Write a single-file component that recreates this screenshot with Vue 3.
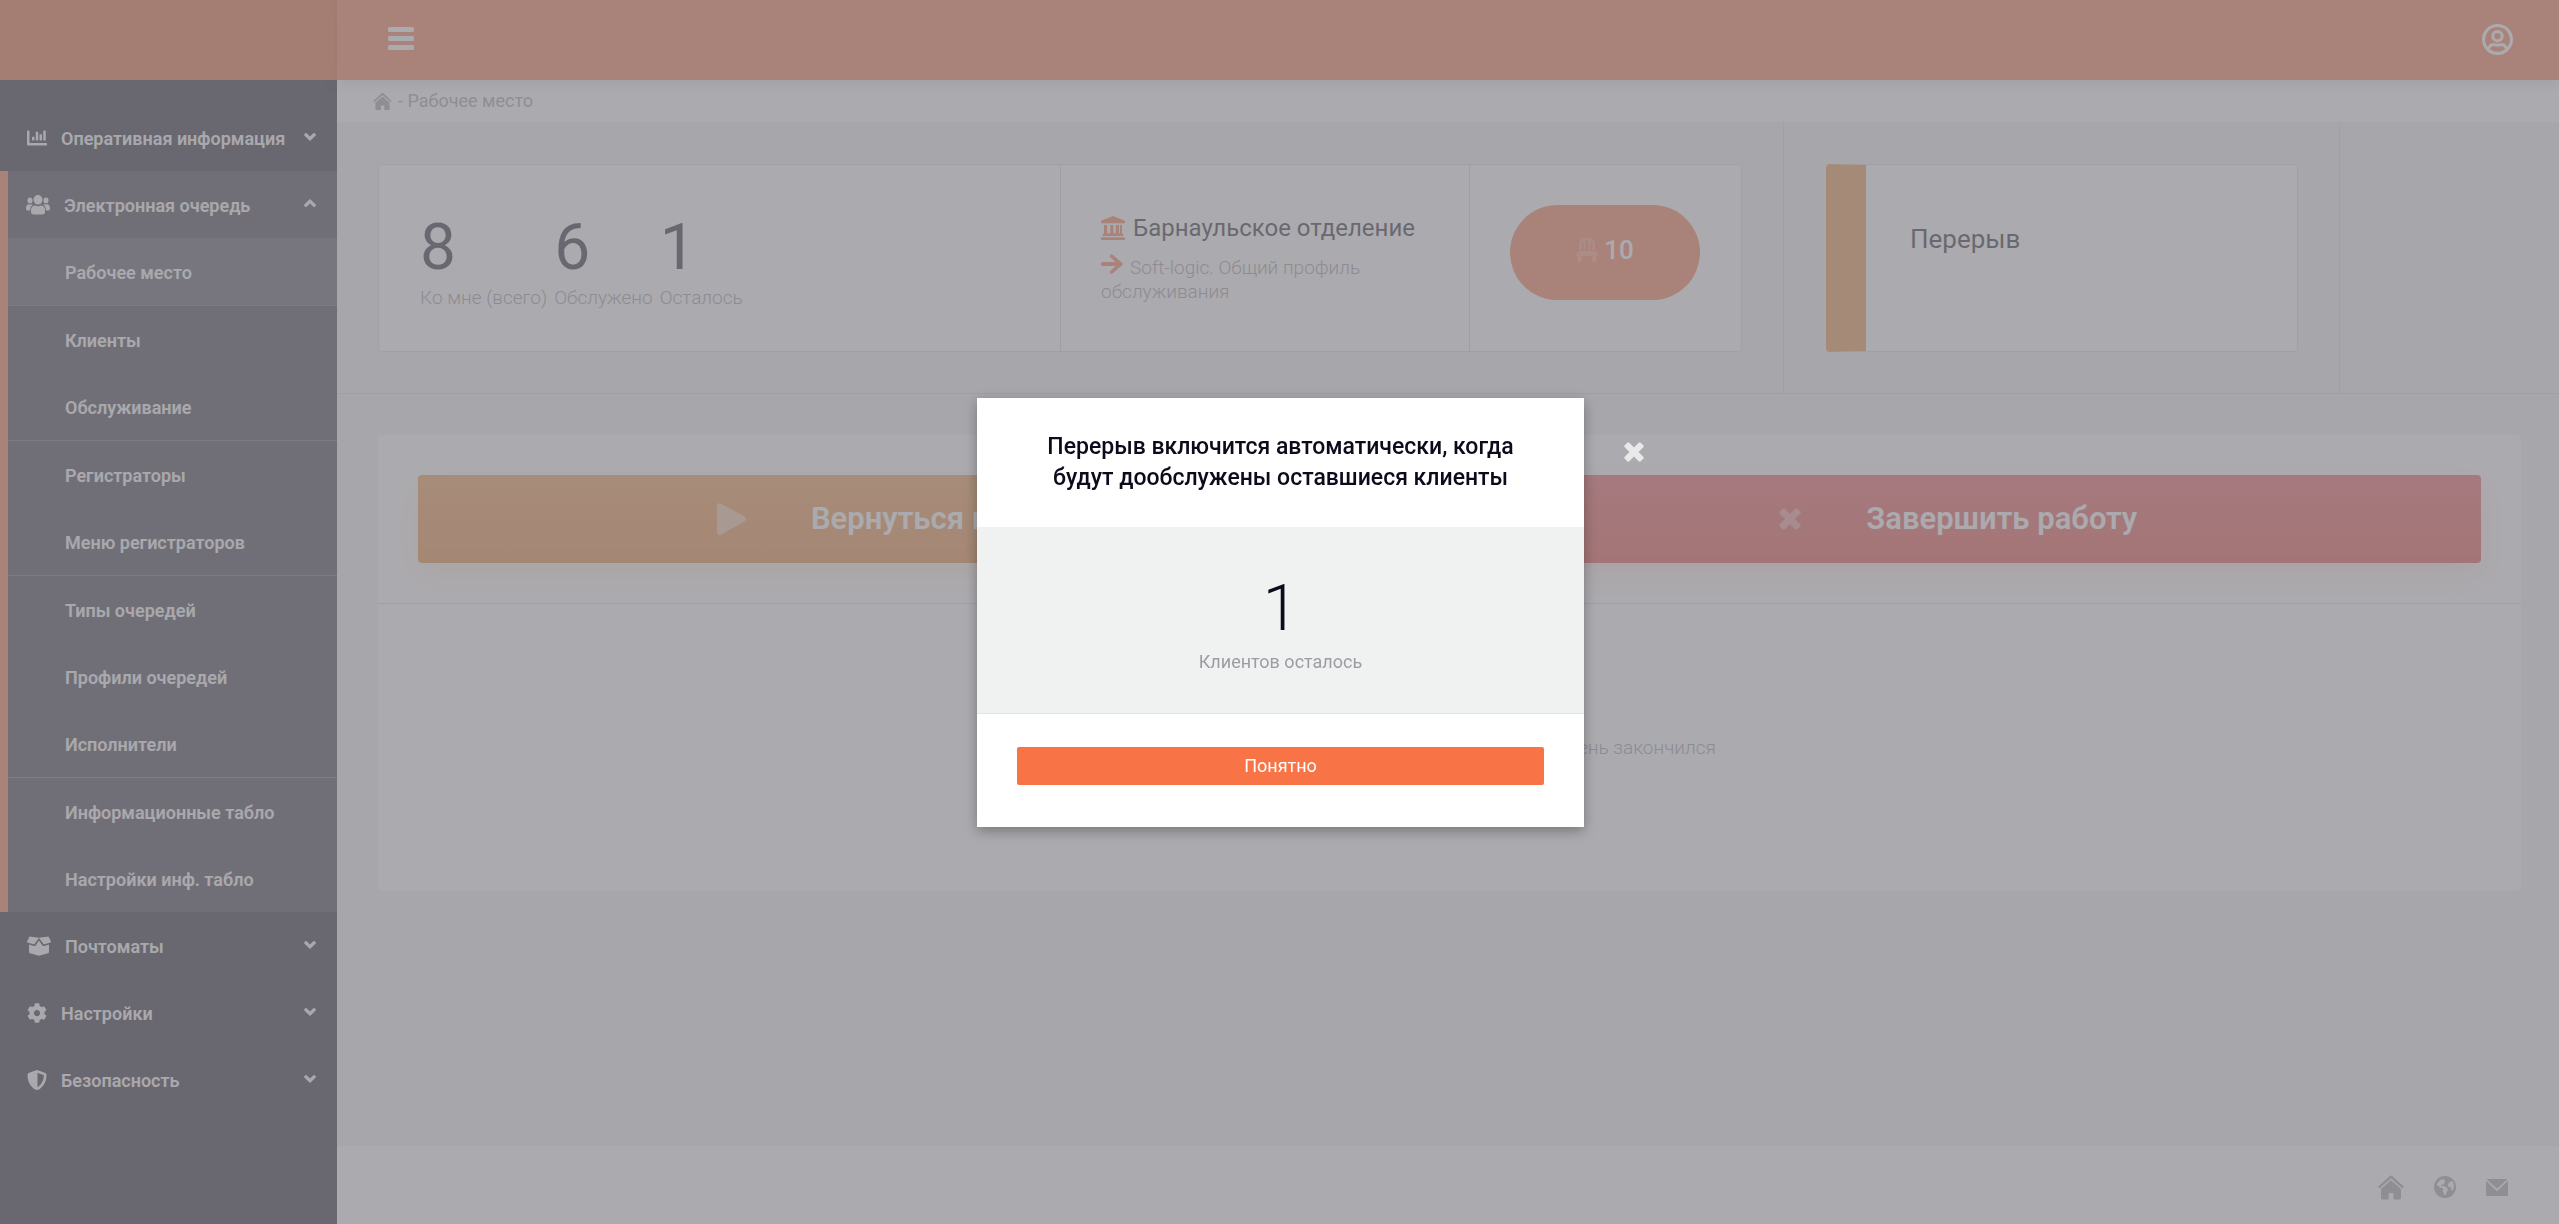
<script setup>
import { h } from 'vue'

const shapes = {
  chart: ['0 0 512 512', 'M332.8 320h38.4c6.4 0 12.8-6.4 12.8-12.8V172.8c0-6.4-6.4-12.8-12.8-12.8h-38.4c-6.4 0-12.8 6.4-12.8 12.8v134.4c0 6.4 6.4 12.8 12.8 12.8zm96 0h38.4c6.4 0 12.8-6.4 12.8-12.8V76.8c0-6.4-6.4-12.8-12.8-12.8h-38.4c-6.4 0-12.8 6.4-12.8 12.8v230.4c0 6.4 6.4 12.8 12.8 12.8zm-288 0h38.4c6.4 0 12.8-6.4 12.8-12.8v-70.4c0-6.4-6.4-12.8-12.8-12.8h-38.4c-6.4 0-12.8 6.4-12.8 12.8v70.4c0 6.4 6.4 12.8 12.8 12.8zm96 0h38.4c6.4 0 12.8-6.4 12.8-12.8V108.8c0-6.4-6.4-12.8-12.8-12.8h-38.4c-6.4 0-12.8 6.4-12.8 12.8v198.4c0 6.4 6.4 12.8 12.8 12.8zM496 384H64V80c0-8.84-7.16-16-16-16H16C7.16 64 0 71.16 0 80v336c0 17.67 14.33 32 32 32h464c8.84 0 16-7.16 16-16v-32c0-8.84-7.16-16-16-16z'],
  users: ['0 0 24 20', 'M12 0a4.5 4.8 0 0 1 0 9.6a4.5 4.8 0 0 1 0-9.6zM4 2.500a2.500 2.900 0 0 1 0 5.800a2.500 2.900 0 0 1 0-5.800zM20 2.500a2.500 2.900 0 0 1 0 5.800a2.500 2.900 0 0 1 0-5.800zM8.800 10.500q3.200 1.500 6.400 0q3.800.5 3.800 4.500v2q0 2.500-3 2.500H8q-3 0-3-2.500v-2q0-4 3.800-4.500zM2.500 9.200q1.500.7 3.200 0l1 .3Q4 11.500 3.900 15.500H1.500Q0 15.500 0 13.500q0-3.500 2.500-4.300zM21.500 9.200q-1.500.7-3.200 0l-1 .3q2.700 2 2.800 6h2.400q1.500 0 1.500-2q0-3.500-2.500-4.300z'],
  box: ['0 0 24 20', 'M2.500.5L12 1.700L21.500.5L24 5.600q.2.800-.6 1L17.500 8.300q-.8.200-1.200-.5L12 1.900L7.700 7.800q-.4.700-1.200.5L.6 6.600Q-.2 6.400 0 5.600zM12 4.500l3.200 4.700q.7 1 1.900.7L22 8.500V16q0 1-1 1.300l-8 2.200q-1 .3-2 0l-8-2.200Q2 17 2 16V8.500l4.900 1.400q1.200.3 1.900-.7z'],
  cog: ['0 0 512 512', 'M487.4 315.7l-42.6-24.6c4.3-23.2 4.3-47 0-70.2l42.6-24.6c4.9-2.8 7.1-8.6 5.500-14-11.100-35.600-30-67.800-54.700-94.600-3.800-4.100-10-5.100-14.800-2.300L380.800 110c-17.900-15.400-38.500-27.300-60.800-35.100V25.800c0-5.600-3.900-10.500-9.400-11.700-36.700-8.200-74.300-7.800-109.200 0-5.500 1.200-9.400 6.100-9.400 11.700V75c-22.200 7.900-42.800 19.800-60.800 35.100L88.700 85.500c-4.900-2.800-11-1.900-14.800 2.300-24.700 26.700-43.600 58.900-54.700 94.600-1.700 5.400.6 11.200 5.500 14L67.300 221c-4.300 23.200-4.300 47 0 70.200l-42.600 24.600c-4.900 2.800-7.100 8.600-5.500 14 11.100 35.600 30 67.800 54.700 94.600 3.800 4.100 10 5.100 14.800 2.300l42.600-24.600c17.900 15.400 38.500 27.300 60.800 35.100v49.200c0 5.600 3.900 10.500 9.400 11.700 36.700 8.200 74.300 7.800 109.200 0 5.500-1.200 9.400-6.100 9.400-11.700v-49.200c22.200-7.900 42.800-19.800 60.800-35.100l42.600 24.600c4.900 2.800 11 1.900 14.800-2.300 24.700-26.700 43.600-58.900 54.700-94.600 1.500-5.500-.7-11.300-5.600-14.100zM256 336c-44.100 0-80-35.900-80-80s35.900-80 80-80 80 35.900 80 80-35.900 80-80 80z'],
  shield: ['0 0 20 20', 'M10 0q.5 0 1 .2l7.300 2.900q1.200.5 1.200 1.800C19.500 12 16 17.500 11 19.800q-1 .4-2 0C4 17.500.5 12 .5 4.900q0-1.300 1.200-1.800L9 .2Q9.500 0 10 0zM10.500 2.700V17.200C14.300 15 16.700 10.600 16.900 5.300z'],
  chevron: ['0 0 12 9', 'M.3 2.200L1.300 1.200Q2 .6 2.700 1.200L6 4.600L9.300 1.200Q10 .6 10.700 1.200L11.700 2.200Q12.200 2.800 11.700 3.400L6.600 8.500Q6 9 5.400 8.500L.3 3.400Q-.2 2.800.3 2.200z'],
  bars: ['0 0 26 24', 'M1.500 0h23q1.500 0 1.500 1.500v2q0 1.500-1.500 1.500h-23Q0 5 0 3.500v-2Q0 0 1.500 0zM1.500 9h23q1.500 0 1.500 1.500v2q0 1.500-1.500 1.500h-23Q0 14 0 12.500v-2Q0 9 1.500 9zM1.500 18h23q1.500 0 1.500 1.500v2q0 1.500-1.500 1.500h-23Q0 23 0 21.500v-2Q0 18 1.500 18z'],
  home: ['0 0 26 24', 'M13 0q.6 0 1.100.5L26 11.200L24.500 13L13 2.800L1.500 13L0 11.200L11.900.5Q12.400 0 13 0zM13 4.800L23 13.600V22.500Q23 24 21.500 24H15.500V18Q15.500 17.500 15 17.500H11.200Q10.700 17.500 10.700 18V24H4.500Q3 24 3 22.500V13.600z'],
  bank: ['0 0 24 24', 'M12 0L24 4.800V6.500Q24 7.300 23.200 7.300H.8Q0 7.300 0 6.500V4.800zM3 9h3.200v8.200h3V9h3.200v8.200h-.8h3.200V9h3.200v8.200h1V9H21v8.200q1.300 0 1.300 1.500V20H1.700V18.700q0-1.500 1.300-1.500zM.8 21.300h22.400q.8 0 .8.800V24H0v-1.900Q0 21.300.8 21.300z'],
  arrow: ['0 0 22 20', 'M9 1.200Q10.300-.4 11.600.7L21.300 9Q22.200 10 21.300 11L11.600 19.500Q10.300 20.400 9 19q-.7-1 .3-2L14.500 12H1.500Q0 12 0 10.500v-1Q0 8 1.500 8H14.500L9.300 3.200Q8.300 2.200 9 1.200z'],
  chair: ['0 0 22 24', 'M3 12V6.500Q3 0 9.500 0h3Q19 0 19 6.500V12H16.500V6q0-2.500-2-3.300V12h-2V2.200h-3V12h-2V2.700Q5.500 3.500 5.500 6V12zM3.500 13h15q1.500 0 2 1.300l1.300 2.500Q22.500 18 21 18H20v6h-3.500V18H5.500V24H2V18H1Q-.5 18 .2 16.800l1.300-2.500Q2 13 3.500 13z'],
  play: ['0 0 29 32', 'M0 3.500Q0 0 3 .3Q4.500.5 6 1.800L27.500 13.500Q29 14.700 29 16T27.500 18.500L6 30.500Q4.500 31.800 3 32Q0 32 0 29z'],
  cross: ['0 0 22 22', 'M5.800.8L11 6L16.200.8Q17.300-.3 18.400.8L21.200 3.600Q22.300 4.700 21.200 5.800L16 11L21.200 16.200Q22.300 17.300 21.200 18.400L18.400 21.200Q17.300 22.300 16.200 21.200L11 16L5.800 21.200Q4.700 22.300 3.600 21.200L.8 18.400Q-.3 17.300.8 16.200L6 11L.8 5.800Q-.3 4.700.8 3.600L3.600.8Q4.700-.3 5.800.8z'],
  globe: ['0 0 22 22', 'M11 0a11 11 0 0 1 0 22a11 11 0 0 1 0-22zM6 4L3.200 7.500L3 9.200L6.500 11.500L9.500 12.500L8.800 15L10.500 19.500L12 18.800L12.500 16L14 14.300L13.300 12L9.500 10L7.500 10.300L7 8.800L9.500 8.500L11.300 5.500L9.800 3zM15.500 6L14 8.500L14.500 11L17 11.500L17.500 15L19.500 13L20 9L18.500 5z'],
  mail: ['0 0 22 17', 'M.5 0h21L11 9.800zM0 1.800L7 8.500L11 12.300L15 8.500L22 1.800V17H0z'],
  user: ['0 0 32 32', 'M16 0a16 16 0 0 1 0 32a16 16 0 0 1 0-32zM16 3.200a12.800 12.800 0 0 0-10.200 20.500Q8 19.500 12 19.500Q16 20.800 20 19.500Q24 19.500 26.200 23.700A12.800 12.800 0 0 0 16 3.200zM16 6.200a6.400 6.400 0 0 1 0 12.800a6.400 6.400 0 0 1 0-12.800zM16 9.300a3.200 3.200 0 0 0 0 6.500a3.200 3.200 0 0 0 0-6.500zM8 26Q16 31.500 24 26Q22.300 22.500 20 22.600Q16 24 12 22.600Q9.700 22.500 8 26z'],
}

const Icon = (props) =>
  h('svg', { viewBox: shapes[props.name][0], fill: 'currentColor', 'fill-rule': 'evenodd', 'aria-hidden': 'true' },
    [h('path', { d: shapes[props.name][1] })])
Icon.props = ['name']

const submenu = [
  ['Рабочее место'],
  ['Клиенты', 'Обслуживание'],
  ['Регистраторы', 'Меню регистраторов'],
  ['Типы очередей', 'Профили очередей', 'Исполнители'],
  ['Информационные табло', 'Настройки инф. табло'],
]
const lower = [
  { icon: 'box', label: 'Почтоматы', wide: true },
  { icon: 'cog', label: 'Настройки' },
  { icon: 'shield', label: 'Безопасность' },
]
const stats = [
  { value: 8, label: 'Ко мне (всего)' },
  { value: 6, label: 'Обслужено' },
  { value: 1, label: 'Осталось' },
]
</script>

<template>
  <div class="app">
    <aside class="sidebar">
      <div class="brand"></div>
      <nav class="menu">
        <a href="#" class="item">
          <Icon name="chart" class="item-icon" /><span class="label">Оперативная информация</span><Icon name="chevron" class="chev" />
        </a>
        <div class="group">
          <a href="#" class="item">
            <Icon name="users" class="item-icon wide" /><span class="label">Электронная очередь</span><Icon name="chevron" class="chev up" />
          </a>
          <div v-for="(part, i) in submenu" :key="i" class="part">
            <a v-for="name in part" :key="name" href="#" class="sub" :class="{ active: i === 0 }">{{ name }}</a>
          </div>
        </div>
        <a v-for="m in lower" :key="m.label" href="#" class="item">
          <Icon :name="m.icon" class="item-icon" :class="{ wide: m.wide }" /><span class="label">{{ m.label }}</span><Icon name="chevron" class="chev" />
        </a>
      </nav>
    </aside>

    <div class="page">
      <header class="topbar">
        <button class="plain" aria-label="Меню"><Icon name="bars" class="bars" /></button>
        <button class="plain" aria-label="Профиль"><Icon name="user" class="user" /></button>
      </header>
      <div class="crumbs">
        <a href="#" aria-label="Главная"><Icon name="home" class="crumb-home" /></a>
        <span>- Рабочее место</span>
      </div>

      <main class="content">
        <section class="summary">
          <div class="cell cell-main">
            <div class="card">
              <div class="stats">
                <div v-for="s in stats" :key="s.label" class="stat">
                  <div class="num">{{ s.value }}</div>
                  <div class="muted">{{ s.label }}</div>
                </div>
              </div>
              <div class="office">
                <div class="office-name"><Icon name="bank" class="bank" />Барнаульское отделение</div>
                <div class="muted profile"><Icon name="arrow" class="arrow" />Soft-logic. Общий профиль обслуживания</div>
              </div>
              <div class="place">
                <button class="pill"><Icon name="chair" class="chair" />10</button>
              </div>
            </div>
          </div>
          <div class="cell cell-state">
            <div class="card state">Перерыв</div>
          </div>
          <div class="cell cell-rest"></div>
        </section>

        <section class="work">
          <div class="actions">
            <button class="action amber"><Icon name="play" class="play" /><span>Вернуться к работе</span></button>
            <button class="action red"><Icon name="cross" class="cross" /><span>Завершить работу</span></button>
          </div>
          <p class="muted empty">Очередь клиентов пуста либо ваш рабочий день закончился</p>
        </section>
      </main>

      <footer class="footer">
        <a href="#" aria-label="Главная"><Icon name="home" class="f-home" /></a>
        <a href="#" aria-label="Сайт"><Icon name="globe" class="f-globe" /></a>
        <a href="#" aria-label="Почта"><Icon name="mail" class="f-mail" /></a>
      </footer>
    </div>

    <div class="overlay">
      <div class="modal" role="dialog" aria-modal="true" aria-labelledby="dlg-title">
        <h2 id="dlg-title">Перерыв включится автоматически, когда будут дообслужены оставшиеся клиенты</h2>
        <div class="modal-body">
          <div class="num light">1</div>
          <div class="left-label">Клиентов осталось</div>
        </div>
        <div class="modal-foot"><button class="ok">Понятно</button></div>
        <button class="plain close" aria-label="Закрыть"><Icon name="cross" class="close-icon" /></button>
      </div>
    </div>
  </div>
</template>

<style>
body { margin: 0; }
</style>

<style scoped>
* { box-sizing: border-box; }
.app {
  display: flex;
  min-height: 100vh;
  font: 400 18px/24px Roboto, "Open Sans", sans-serif;
  color: #130f20;
  background: #f1f1f2;
}
a { color: inherit; text-decoration: none; }
svg { display: block; flex: none; }
button { font: inherit; color: inherit; border: 0; cursor: pointer; }
.plain { background: none; padding: 0; }
.muted { color: #909197; font-size: 19px; font-weight: 300; }

.sidebar { width: 337px; flex: none; background: #130f20; color: #f8f8f8; }
.brand { height: 80px; background: #e7622e; }
.menu { padding-top: 24px; font-weight: 600; }
.item { display: flex; align-items: center; height: 67px; padding: 0 21px 0 27px; }
.item-icon { width: 20px; height: 20px; margin-right: 14px; }
.item-icon.wide { width: 24px; }
.label { flex: 1; white-space: nowrap; padding-top: 3px; }
.chev { width: 12px; height: 9px; margin-bottom: 2px; }
.chev.up { transform: rotate(180deg); }
.group { background: #2d2c3d; border-left: 8px solid #f87447; }
.group .item { padding-left: 18px; }
.part + .part { border-top: 1px solid #5b5a60; }
.sub { display: flex; align-items: center; height: 67px; padding: 2px 0 0 57px; }
.sub.active { background: #464351; }

.page { flex: 1; min-width: 0; display: flex; flex-direction: column; }
.topbar {
  height: 80px;
  padding: 0 46px 2px 51px;
  display: flex;
  align-items: center;
  justify-content: space-between;
  background: #f87447;
  color: #fff;
  position: relative;
  box-shadow: 0 2px 14px rgba(0, 0, 0, .2);
}
.bars { width: 26px; height: 24px; }
.user { width: 31px; height: 31px; }
.crumbs { height: 42px; display: flex; align-items: center; gap: 6px; padding-left: 36px; background: #fff; color: #98999f; }
.crumb-home { width: 19px; height: 17px; }

.content { flex: 1; }
.summary { display: flex; height: 272px; border-bottom: 1px solid #d8d8da; }
.cell { padding: 42px 41px; border-right: 1px solid #dcdcde; }
.cell-main { flex: 0 0 1447px; }
.cell-state { flex: 0 0 556px; padding-left: 42px; }
.cell-rest { flex: 1; border: 0; }
.card { display: flex; height: 188px; background: #fff; border: 1px solid #d8d8da; border-radius: 4px; }
.stats { flex: 1; display: flex; gap: 7px; padding: 45px 0 0 41px; }
.num { font-size: 64px; line-height: 76px; }
.office { width: 409px; padding: 50px 40px 0; border-left: 1px solid #d8d8da; }
.office-name { display: flex; align-items: center; gap: 8px; font-size: 24px; line-height: 26px; white-space: nowrap; }
.bank { width: 24px; height: 24px; color: #f87447; }
.profile { padding-top: 13px; }
.arrow { display: inline-block; width: 22px; height: 20px; margin-right: 7px; color: #f87447; }
.place { width: 272px; padding: 40px 40px 0; border-left: 1px solid #d8d8da; }
.pill {
  width: 190px;
  height: 95px;
  border-radius: 48px;
  background: #f87447;
  color: #fff;
  font-size: 26px;
  font-weight: 500;
  display: flex;
  align-items: center;
  justify-content: center;
  gap: 6px;
  padding: 0 0 5px;
}
.chair { width: 22px; height: 24px; opacity: .25; }
.state { border-left: 40px solid #ea8d3d; padding: 60px 44px 0; font-size: 26px; line-height: 28px; }

.work { margin: 41px 38px 41px 41px; min-height: 456px; background: #fff; border-radius: 4px; }
.actions { display: flex; gap: 40px; padding: 40px; border-bottom: 1px solid #d8d8da; }
.action {
  flex: 1;
  height: 88px;
  border-radius: 4px;
  color: #fff;
  font-size: 31px;
  font-weight: 600;
  display: flex;
  align-items: center;
  justify-content: center;
  gap: 65px;
  padding: 0 34px 0 0;
}
.amber { background: linear-gradient(#ee9444, #e7822e); box-shadow: 0 12px 30px rgba(231, 140, 46, .15); }
.red { background: linear-gradient(#ea5456, #e34236); box-shadow: 0 12px 30px rgba(227, 66, 54, .15); }
.play { width: 29px; height: 32px; opacity: .5; }
.cross { width: 22px; height: 22px; opacity: .4; }
.empty { margin: 0; padding-top: 132px; text-align: center; }

.footer { height: 78px; display: flex; align-items: center; justify-content: flex-end; gap: 30px; padding: 4px 51px 0 0; background: #fff; color: #98999f; }
.f-home { width: 26px; height: 25px; }
.f-globe { width: 22px; height: 22px; }
.f-mail { width: 22px; height: 17px; }

.overlay {
  position: fixed;
  inset: 0;
  display: flex;
  align-items: center;
  justify-content: center;
  background: rgba(138, 137, 143, .72);
}
.modal { position: relative; width: 607px; margin: 1px 0 0 2px; background: #fff; box-shadow: 0 4px 12px rgba(0, 0, 0, .3); }
.modal h2 { margin: 0; padding: 33px 60px 34px; font-size: 23px; line-height: 31px; font-weight: 500; text-align: center; color: #0d0b1b; }
.modal-body { padding: 44px 0 39px; background: #f0f2f1; border-bottom: 1px solid #e2e4e4; text-align: center; }
.light { font-weight: 300; color: #0d0b1b; }
.left-label { padding-top: 3px; color: #9c9ca4; }
.modal-foot { padding: 33px 40px 42px; }
.ok { width: 100%; height: 38px; display: block; padding: 0; border-radius: 2px; background: #f87447; color: #fff; }
.close { position: absolute; right: -60px; top: 44px; color: #e9e9ea; }
.close-icon { width: 20px; height: 20px; }
</style>
